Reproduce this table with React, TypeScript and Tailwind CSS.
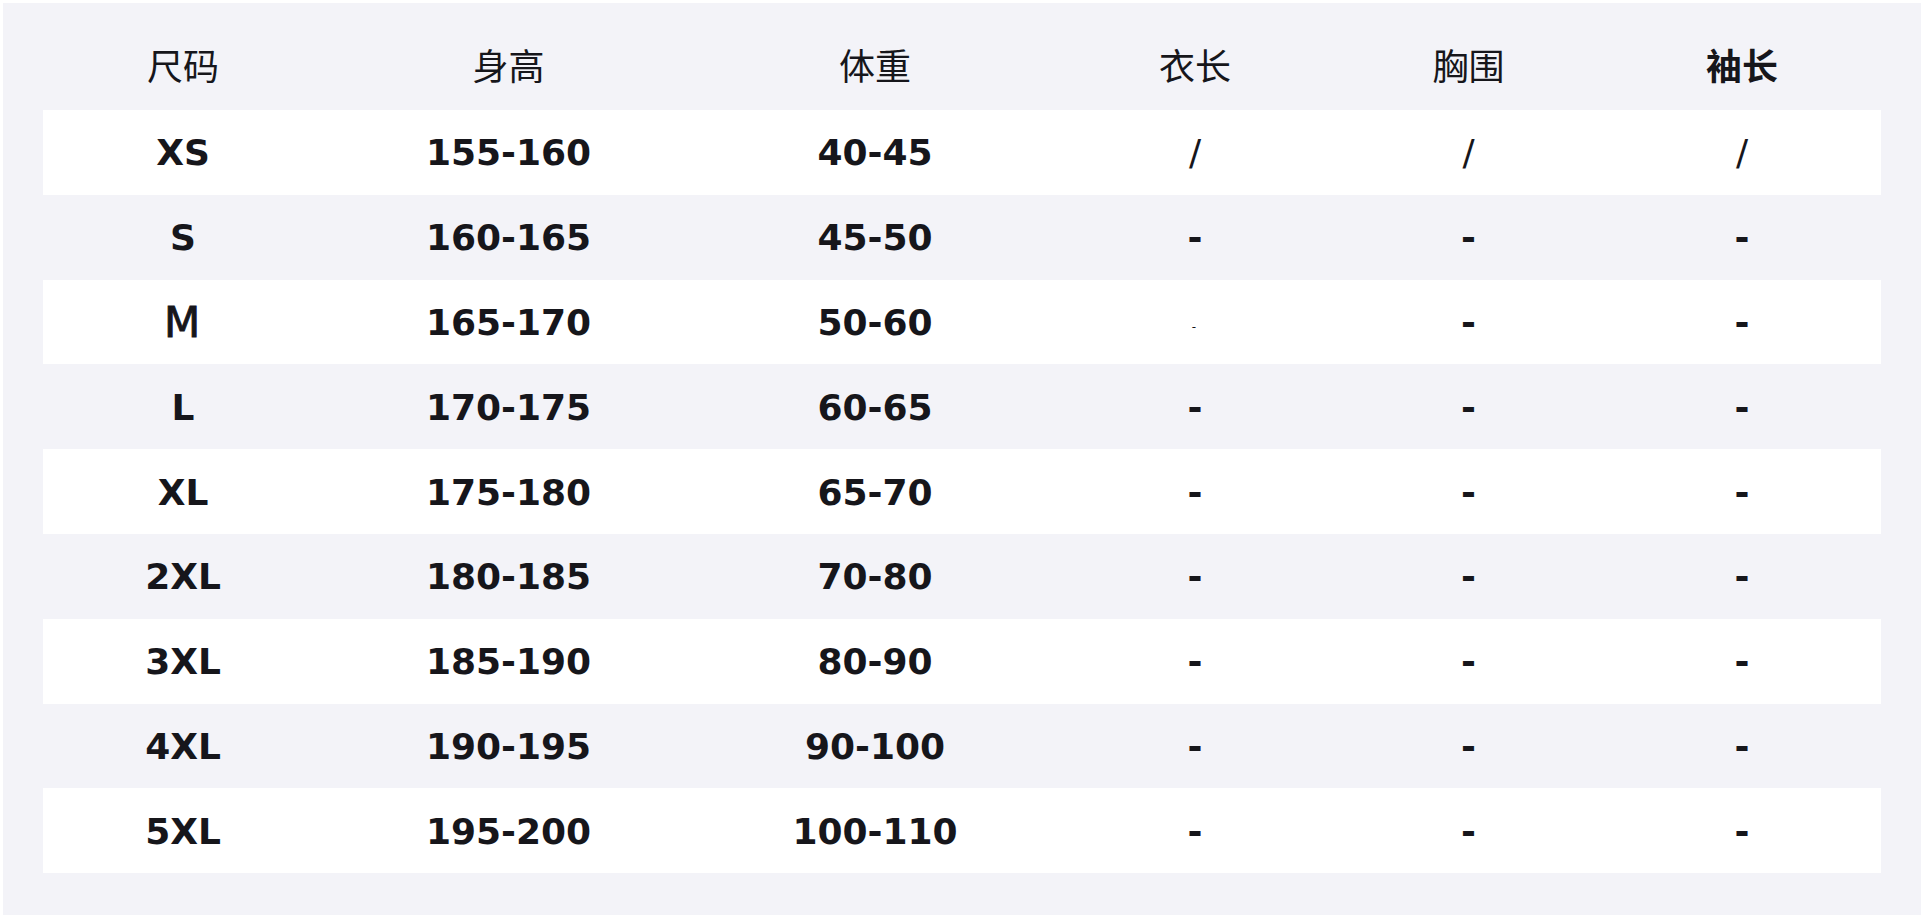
import React from 'react';

const cols = 'grid grid-cols-[278px_373px_360px_280px_267px_280px]';

const rows = [
  ['XS', '155-160', '40-45', '/', '/', '/'],
  ['S', '160-165', '45-50', '-', '-', '-'],
  ['M', '165-170', '50-60', '', '-', '-'],
  ['L', '170-175', '60-65', '-', '-', '-'],
  ['XL', '175-180', '65-70', '-', '-', '-'],
  ['2XL', '180-185', '70-80', '-', '-', '-'],
  ['3XL', '185-190', '80-90', '-', '-', '-'],
  ['4XL', '190-195', '90-100', '-', '-', '-'],
  ['5XL', '195-200', '100-110', '-', '-', '-'],
];

function Cell({ value, col }: { value: string; col: number }) {
  // slashes are drawn thin, the rest bold
  if (value === '/') {
    return <div className="flex items-center justify-center pl-[2px] font-normal">/</div>;
  }
  // size M is set lighter and a touch larger
  if (col === 0 && value === 'M') {
    return <div className="flex items-center justify-center text-[42px] font-normal [-webkit-text-stroke:0.9px_#16161b]">M</div>;
  }
  // 衣长 in row M only holds a tiny dash
  if (value === '') {
    return (
      <div className="flex items-center justify-center">
        <span className="text-[12px] font-normal translate-y-[4px]">-</span>
      </div>
    );
  }
  return <div className="flex items-center justify-center pl-[2px]">{value}</div>;
}

export default function App() {
  return (
    <div className="min-h-screen bg-white p-[3px]">
      <div
        className="bg-[#f3f3f8] h-[912px] px-[40px] text-[#16161b]"
        style={{ fontFamily: '"DejaVu Sans", "Noto Sans CJK SC", sans-serif' }}
      >
        <div className={`${cols} h-[107px] pt-[47px] text-[36px] leading-[36px]`}>
          <div className="text-center pl-[2px]">尺码</div>
          <div className="text-center pl-[2px]">身高</div>
          <div className="text-center pl-[2px]">体重</div>
          <div className="text-center pl-[2px]">衣长</div>
          <div className="text-center pl-[2px]">胸围</div>
          <div className="text-center pl-[2px] font-bold">袖长</div>
        </div>

        {rows.map((r, i) => (
          <div
            key={r[0]}
            className={`${cols} h-[84.8px] pt-[2px] text-[36px] font-bold ${i % 2 === 0 ? 'bg-white' : ''}`}
          >
            {r.map((v, c) => (
              <Cell key={c} value={v} col={c} />
            ))}
          </div>
        ))}
      </div>
    </div>
  );
}
